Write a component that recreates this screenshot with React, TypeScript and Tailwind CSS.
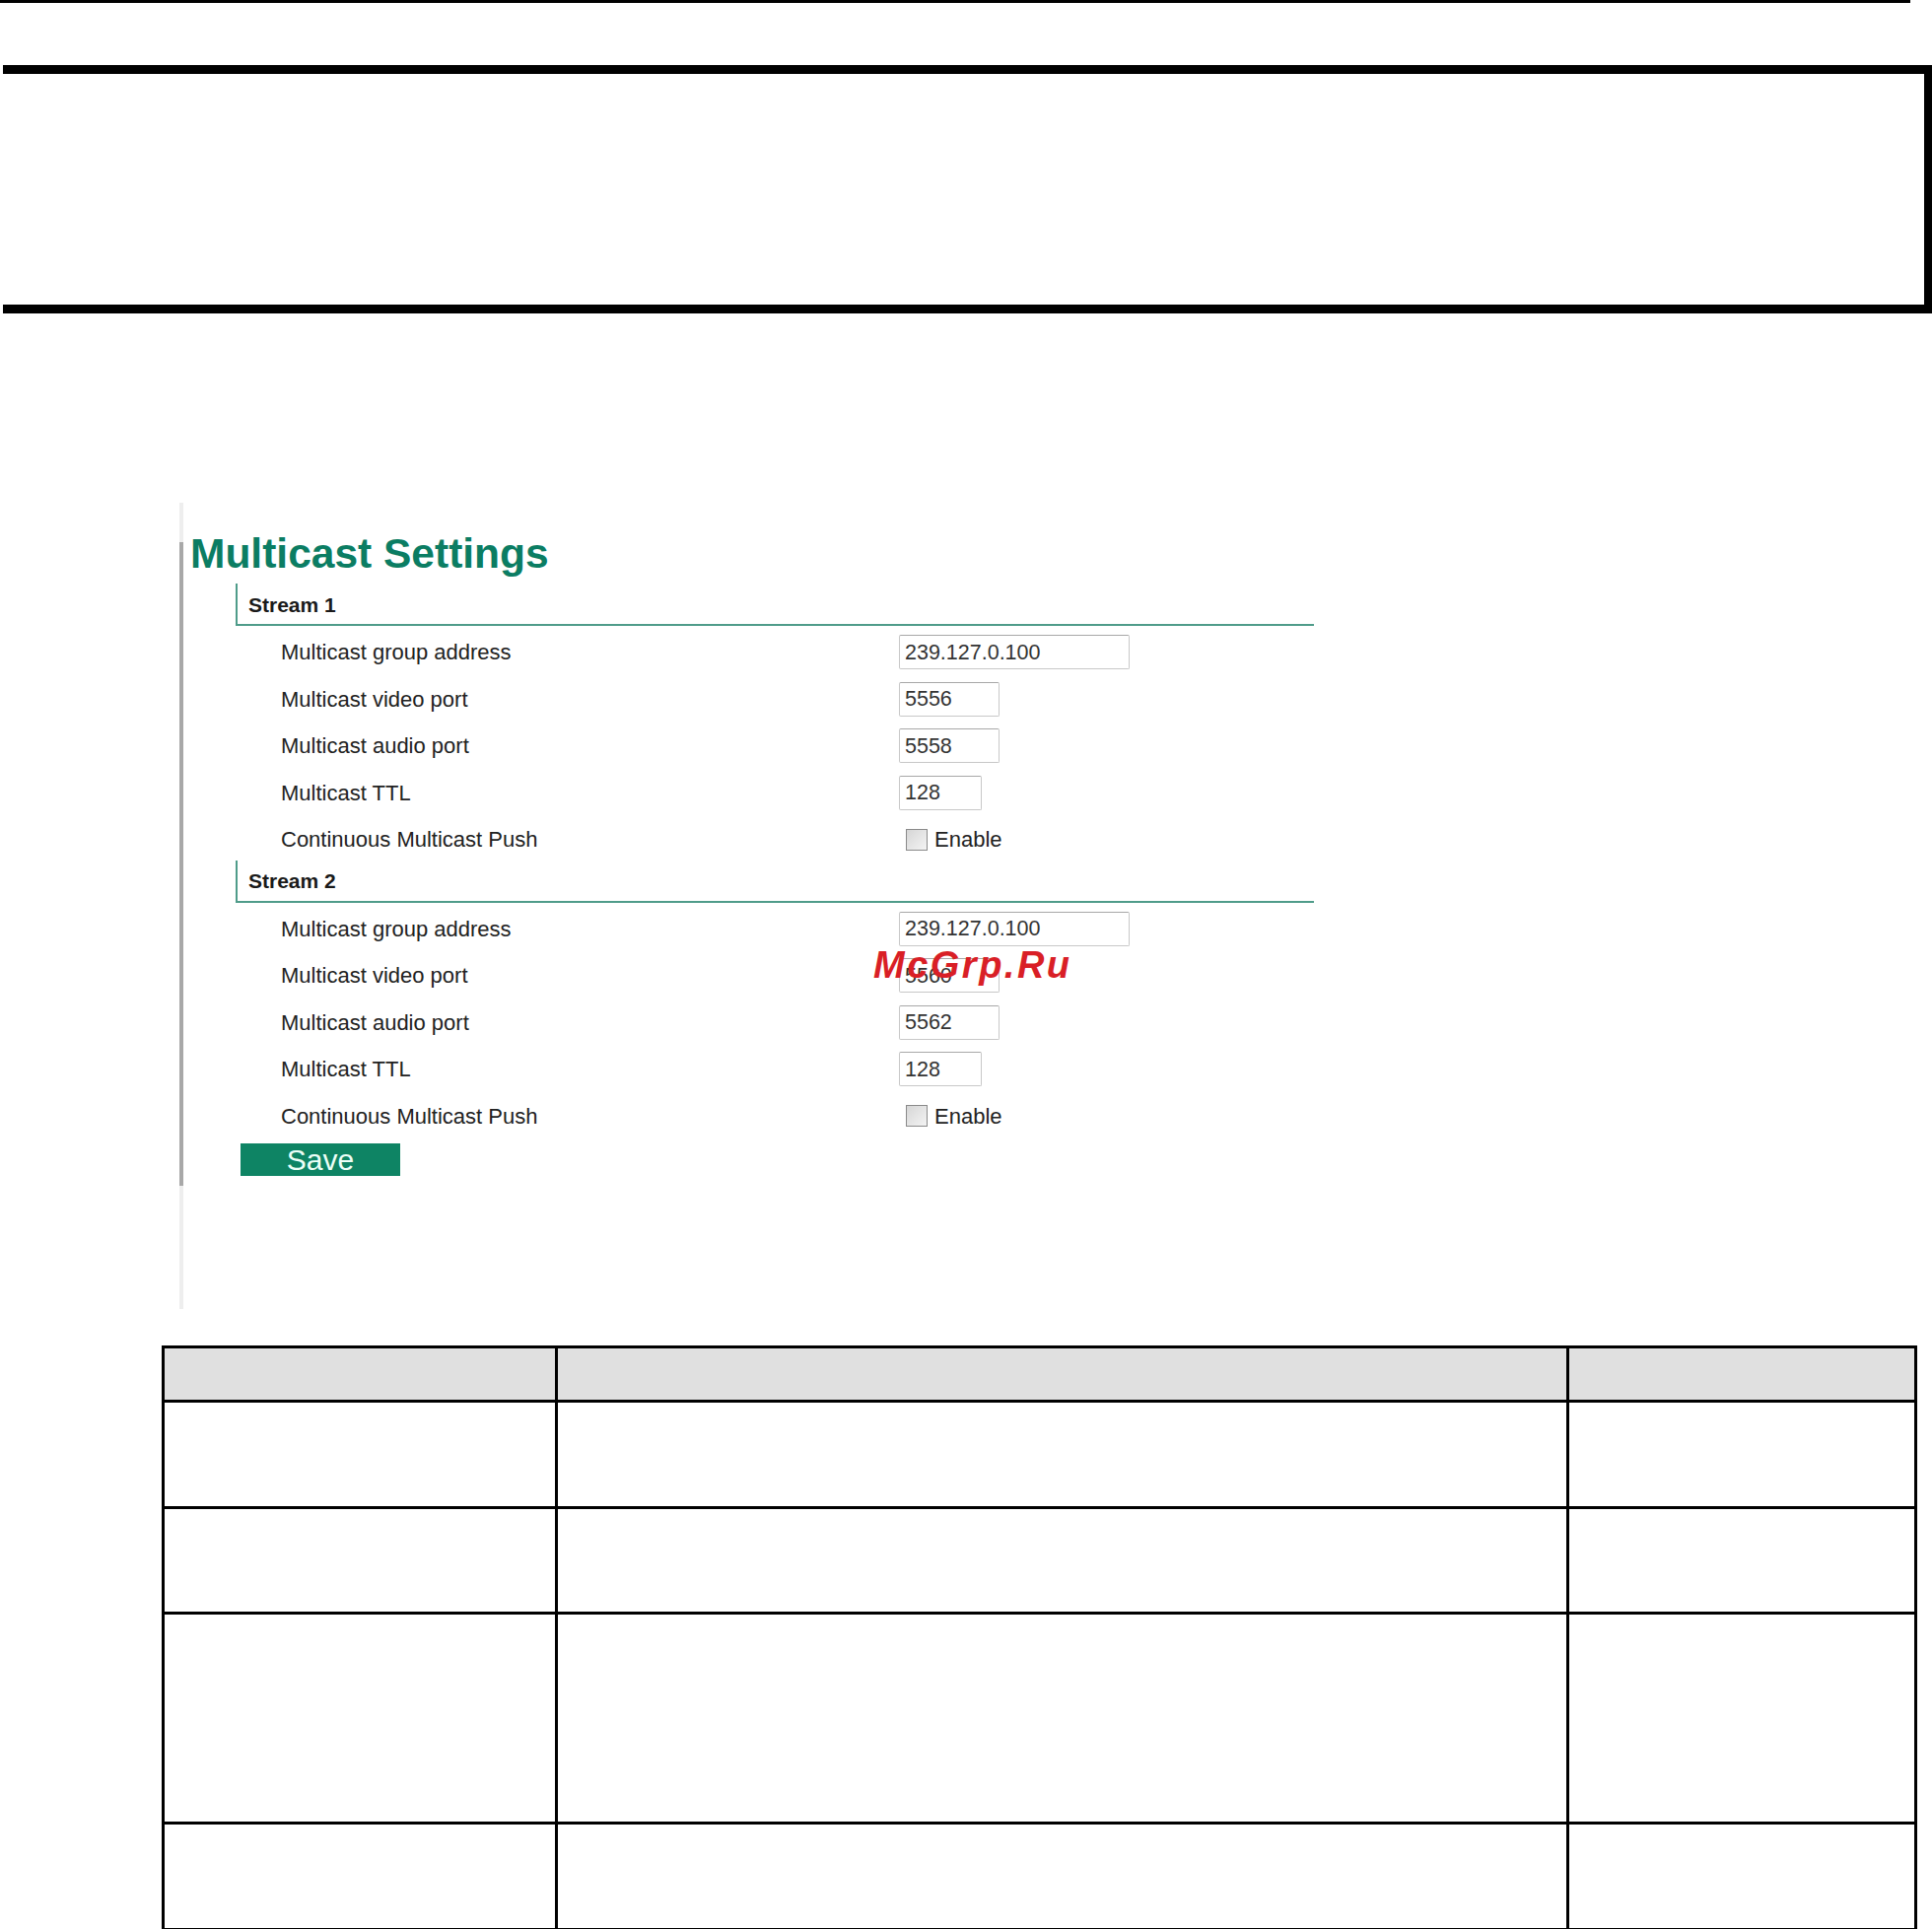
import React from 'react'

type Row = { label: string; kind: 'text' | 'check'; value?: string; width?: string }

const stream1: Row[] = [
  { label: 'Multicast group address', kind: 'text', value: '239.127.0.100', width: 'w-[234px]' },
  { label: 'Multicast video port', kind: 'text', value: '5556', width: 'w-[102px]' },
  { label: 'Multicast audio port', kind: 'text', value: '5558', width: 'w-[102px]' },
  { label: 'Multicast TTL', kind: 'text', value: '128', width: 'w-[84px]' },
  { label: 'Continuous Multicast Push', kind: 'check' },
]

const stream2: Row[] = [
  { label: 'Multicast group address', kind: 'text', value: '239.127.0.100', width: 'w-[234px]' },
  { label: 'Multicast video port', kind: 'text', value: '5560', width: 'w-[102px]' },
  { label: 'Multicast audio port', kind: 'text', value: '5562', width: 'w-[102px]' },
  { label: 'Multicast TTL', kind: 'text', value: '128', width: 'w-[84px]' },
  { label: 'Continuous Multicast Push', kind: 'check' },
]

function Stream({ title, rows }: { title: string; rows: Row[] }) {
  return (
    <div>
      {/* Header */}
      <div className="flex h-[43px] w-[1094px] items-center border-b-2 border-l-2 border-[#4f9c8a] pl-[11px] pt-[2px] text-[21px] font-bold text-[#1a1a1a]">
        {title}
      </div>
      {rows.map((row, idx) => (
        <div key={idx} className="flex h-[47.5px] items-center pt-[6px]">
          <div className="w-[673px] pl-[46px] text-[22px] text-[#222]">{row.label}</div>
          {row.kind === 'text' ? (
            <div
              className={`flex h-[35px] items-center rounded-[2px] border border-[#c8c8c8] border-t-[#a8a8a8] pl-[5px] text-[21.5px] text-[#333] ${row.width}`}
            >
              {row.value}
            </div>
          ) : (
            <div className="flex items-center pl-[7px]">
              <div className="h-[22px] w-[22px] border border-[#8a8a8a] bg-gradient-to-br from-[#d6d6d6] to-[#f4f4f4]" />
              <span className="ml-[7px] text-[22px] text-[#222]">Enable</span>
            </div>
          )}
        </div>
      ))}
    </div>
  )
}

export default function App() {
  return (
    <div className="relative h-[1957px] w-[1960px] overflow-hidden bg-white font-['Liberation_Sans',Arial,sans-serif]">
      {/* Top rule */}
      <div className="h-[3px] w-[1938px] bg-black" />

      {/* Empty note box */}
      <div className="ml-[3px] mt-[63px] h-[252px] w-[1957px] border-b-[9px] border-r-[8px] border-t-[9px] border-black" />

      {/* Settings panel */}
      <div className="ml-[182px] mt-[192px] flex">
        <div className="flex w-[4px] flex-col">
          <div className="h-[40px] bg-[#eeeeee]" />
          <div className="h-[653px] bg-[#a8a8a8]" />
          <div className="h-[125px] bg-[#eeeeee]" />
        </div>
        <div>
          <h1 className="ml-[7px] mt-[28px] text-[42.5px] font-bold leading-[48px] text-[#0b7d63]">
            Multicast Settings
          </h1>
          <div className="ml-[53px] mt-[6px]">
            <Stream title="Stream 1" rows={stream1} />
            <Stream title="Stream 2" rows={stream2} />
            <button className="ml-[5px] mt-[7px] flex h-[33px] w-[162px] items-center justify-center bg-[#0e8464] text-[30px] leading-none text-[#ecfff7]">
              Save
            </button>
          </div>
        </div>
      </div>

      {/* Parameter table */}
      <table className="ml-[164px] mt-[37px] w-[1781px] border-collapse">
        <thead>
          <tr className="h-[55px] bg-[#e0e0e0]">
            <th className="w-[400px] border-[3px] border-black" />
            <th className="w-[1027px] border-[3px] border-black" />
            <th className="w-[354px] border-[3px] border-black" />
          </tr>
        </thead>
        <tbody>
          {[108, 107, 213, 108].map((h, idx) => (
            <tr key={idx} style={{ height: h }}>
              <td className="border-[3px] border-black" />
              <td className="border-[3px] border-black" />
              <td className="border-[3px] border-black" />
            </tr>
          ))}
        </tbody>
      </table>

      {/* Watermark */}
      <div className="absolute left-[886px] top-[951px] text-[38px] font-bold italic tracking-[2.5px] text-[#d91f26]">
        McGrp.Ru
      </div>
    </div>
  )
}
